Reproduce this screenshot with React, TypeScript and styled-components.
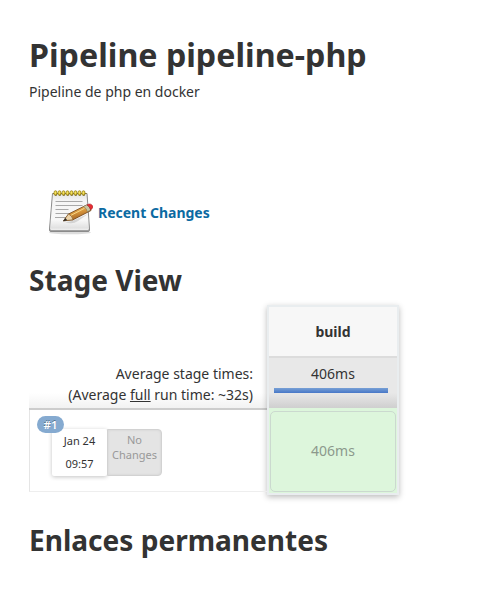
import React from "react";
import styled, { createGlobalStyle } from "styled-components";

const GlobalStyle = createGlobalStyle`
  *, *::before, *::after { box-sizing: border-box; }
  body {
    margin: 0;
    background: #fff;
    color: #333;
    font-family: "Noto Sans", sans-serif;
    font-size: 14px;
    line-height: 21px;
  }
`;

const Page = styled.main`
  display: flex;
  flex-direction: column;
  align-items: flex-start;
  height: 606px;
  padding: 33px 0 0 29px;
  overflow: hidden;
`;

const Title = styled.h1`
  margin: 0;
  font-size: 32.2px;
  line-height: 44px;
  font-weight: 700;
  white-space: nowrap;
`;

const Heading = styled.h2<{ $top: number }>`
  margin: ${(p) => p.$top}px 0 0;
  font-size: 28.06px;
  line-height: 38px;
  font-weight: 700;
  white-space: nowrap;
`;

const Description = styled.p`
  margin: 4px 0 0;
`;

const ChangesLink = styled.a`
  display: flex;
  align-items: center;
  gap: 5px;
  height: 48px;
  margin: 86px 0 0 16px;
  color: #0b6aa2;
  font-weight: 700;
  text-decoration: none;
`;

const StageView = styled.section`
  display: grid;
  grid-template-columns: 238px 132px;
  height: 190px;
  margin-top: 6px;
`;

const RunColumn = styled.div`
  display: flex;
  flex-direction: column;
  padding-top: 53px;
  height: 187px;
`;

const Averages = styled.div`
  height: 52px;
  padding: 5px 14px 0 0;
  text-align: right;
  background: linear-gradient(to bottom, #fff 0, #fff 70%, #f2f2f2 100%);
  border-bottom: 2px solid #cdcdcd;
  white-space: nowrap;
`;

const RunRow = styled.div`
  position: relative;
  flex: 1;
  border-left: 1px solid #e5e5e5;
  border-bottom: 1px solid #eee;
  padding: 19px 0 0 22px;
  font-size: 11px;
`;

const Badge = styled.span`
  position: absolute;
  left: 7px;
  top: 6px;
  width: 27px;
  height: 17px;
  border-radius: 9px;
  background: #85aad0;
  color: #fff;
  font-size: 11.5px;
  line-height: 17px;
  font-weight: 600;
  text-align: center;
  text-shadow: 0 -1px 0 rgba(0, 0, 0, 0.35);
`;

const RunCards = styled.div`
  display: flex;
  height: 47px;
`;

const StartTime = styled.div`
  display: flex;
  flex-direction: column;
  width: 55px;
  line-height: 23px;
  text-align: center;
  background: #fff;
  border-radius: 2px;
  box-shadow: 0 1px 4px rgba(0, 0, 0, 0.24);
`;

const NoChanges = styled.div`
  width: 55px;
  padding-top: 2px;
  color: #999;
  line-height: 15px;
  text-align: center;
  background: #e4e4e4;
  border: 1px solid #d2d2d2;
  border-radius: 0 4px 4px 0;
  box-shadow: inset 0 0 3px rgba(0, 0, 0, 0.08);
`;

const StageCard = styled.div`
  display: flex;
  flex-direction: column;
  height: 190px;
  border: 2px solid #e9edef;
  background: #ddf6dc;
  box-shadow: 0 2px 6px rgba(0, 0, 0, 0.27);
`;

const StageName = styled.div`
  height: 51px;
  border-bottom: 2px solid #dcdcdc;
  background: #f7f7f7;
  font-weight: 700;
  line-height: 50px;
  text-align: center;
`;

const StageAverage = styled.div`
  display: flex;
  flex-direction: column;
  align-items: center;
  height: 50px;
  padding-top: 5px;
  background: linear-gradient(to bottom, #e8e8e8 0, #e8e8e8 70%, #cfcfcf 100%);
`;

const DurationBar = styled.div`
  width: 114px;
  height: 5px;
  margin: 4px 0 0 -4px;
  background: linear-gradient(to bottom, #78a0d5, #4777c7);
`;

const StageResult = styled.div`
  flex: 1;
  margin: 3px 1px 1px;
  border: 1px solid #cbd9cf;
  border-radius: 5px;
  color: #8c998c;
  line-height: 78px;
  text-align: center;
`;

const rings = [10.5, 14.5, 18.5, 22.5, 26.5, 30.5, 34.5, 38.5];

function NotepadIcon() {
  return (
    <svg width="48" height="48" viewBox="0 0 48 48" aria-hidden="true">
      <defs>
        <linearGradient id="paper" x1="0" y1="0" x2="0" y2="1">
          <stop offset="0" stopColor="#e6e6e6" />
          <stop offset="0.2" stopColor="#f5f5f5" />
          <stop offset="0.75" stopColor="#f7f7f7" />
          <stop offset="1" stopColor="#dedede" />
        </linearGradient>
        <linearGradient id="wood" x1="0.2" y1="0" x2="0.6" y2="1">
          <stop offset="0" stopColor="#e9bd68" />
          <stop offset="0.5" stopColor="#d6953c" />
          <stop offset="1" stopColor="#94551d" />
        </linearGradient>
      </defs>
      <ellipse cx="25" cy="44.500" rx="21" ry="1.800" fill="#777" opacity="0.25" />
      <path d="M7.500 5.500h34.500L44.500 41v1.200q0 1.300-1.500 1.300H6q-1.500 0-1.500-1.300V41z" fill="#a1a1a1" stroke="#858585" strokeWidth="0.900" />
      <path d="M8 6h33.500L44 41H5z" fill="url(#paper)" />
      <path d="M5.500 41.300h38" stroke="#fff" />
      <path d="M10.500 13.500h27M10.500 17.500h27M10.500 21.500h13M10.500 25.500h20M10 29.500h11" stroke="#a8a8a8" />
      <path d="M8 5.500h33.500" stroke="#8c7b28" />
      {rings.map((x) => (
        <g key={x}>
          <rect x={x - 1.4} y="2.800" width="2.800" height="4.600" rx="1.400" fill="#eed638" stroke="#917b1d" strokeWidth="0.800" />
          <path d={`M${x - 0.300} 3.700v2`} stroke="#fff29a" strokeWidth="0.700" />
          <circle cx={x + 0.500} cy="7.100" r="0.700" fill="#4c4116" />
        </g>
      ))}
      <path d="M20 34q7 3 13-1l10-7-14 6q-4 2-9 2z" fill="#777" opacity="0.250" />
      <path d="M18.500 32.800l5-6.800L41 17.300q4 .3 5 5.200L28 31.800z" fill="url(#wood)" stroke="#704014" strokeWidth="0.800" />
      <path d="M18.500 32.800l5-6.800q3.600 1.500 4.500 5.800z" fill="#edd4aa" stroke="#78501e" strokeWidth="0.600" />
      <path d="M18 33.200l2.500-3.200 1.700 2.300z" fill="#282828" />
      <path d="M38.500 18.500l3.300-1.700q3 1.500 3.800 5.200l-3.200 1.800q-.7-3.500-3.900-5.300z" fill="#c8c5a3" stroke="#747057" strokeWidth="0.500" />
      <path d="M41.800 16.800q3.900-2 5.600.7 1.500 2.700-1.700 4.400-.8-3.400-3.900-5.100z" fill="#e62c32" stroke="#a31d23" strokeWidth="0.500" />
      <path d="M26 27.300l13.500-7" stroke="#f8d787" strokeWidth="1" />
    </svg>
  );
}

export default function App() {
  return (
    <>
      <GlobalStyle />
      <Page>
        <Title>Pipeline pipeline-php</Title>
        <Description>Pipeline de php en docker</Description>
        <ChangesLink>
          <NotepadIcon />
          Recent Changes
        </ChangesLink>
        <Heading $top={25}>Stage View</Heading>
        <StageView>
          <RunColumn>
            <Averages>
              <div>Average stage times:</div>
              <div>(Average <u>full</u> run time: ~32s)</div>
            </Averages>
            <RunRow>
              <RunCards>
                <StartTime>
                  <span>Jan 24</span>
                  <span>09:57</span>
                </StartTime>
                <NoChanges>No<br />Changes</NoChanges>
              </RunCards>
              <Badge>#1</Badge>
            </RunRow>
          </RunColumn>
          <StageCard>
            <StageName>build</StageName>
            <StageAverage>
              406ms
              <DurationBar />
            </StageAverage>
            <StageResult>406ms</StageResult>
          </StageCard>
        </StageView>
        <Heading $top={26}>Enlaces permanentes</Heading>
      </Page>
    </>
  );
}
